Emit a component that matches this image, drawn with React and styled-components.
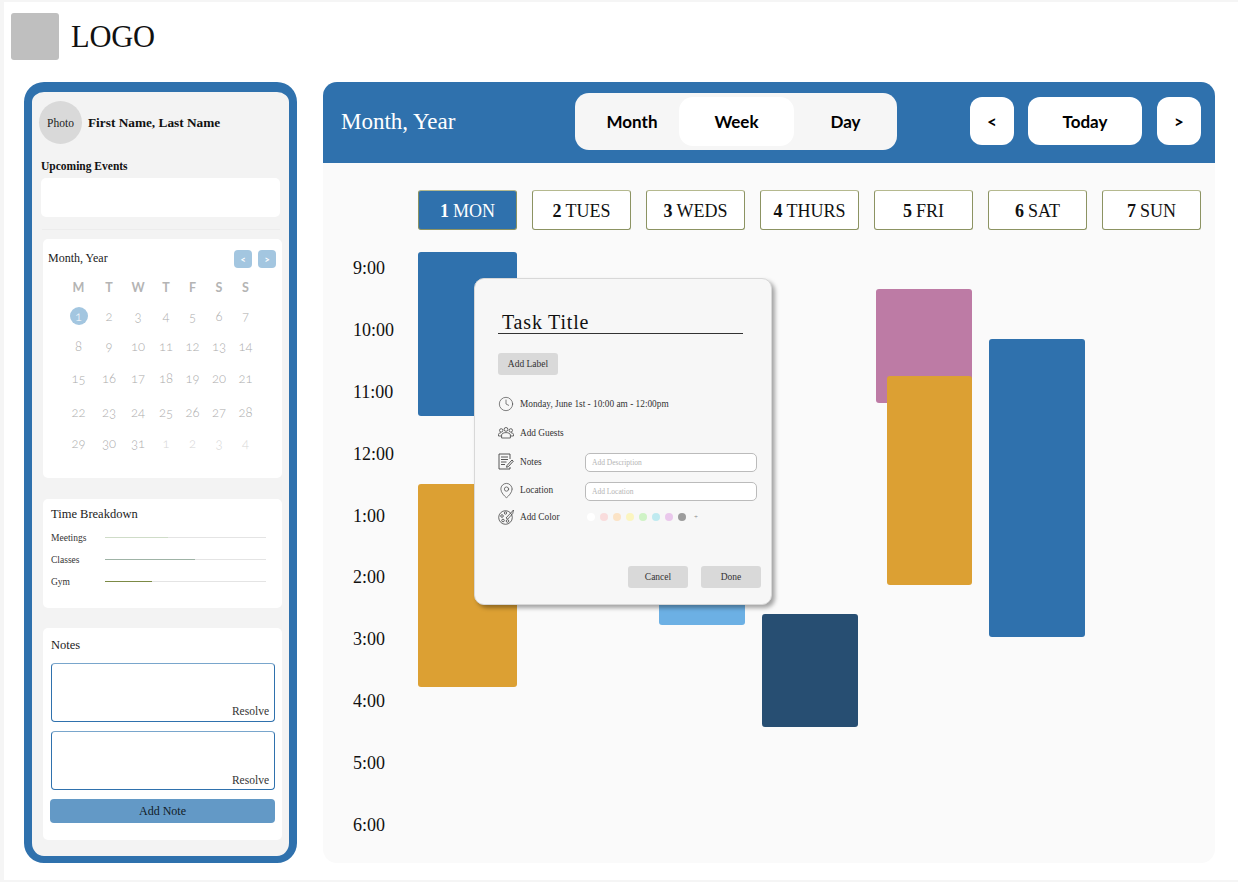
import React from "react";
import styled, { createGlobalStyle } from "styled-components";
import { Clock, MapPin } from "lucide-react";

const SERIF = `"Liberation Serif", "DejaVu Serif", serif`;
const SANS = `Lato, "Open Sans", sans-serif`;
const BLUE = "#2f71ad";

const GlobalStyle = createGlobalStyle`
  html, body { margin: 0; padding: 0; background: #f5f5f5; }
  body { font-family: ${SERIF}; color: #111; }
  * { box-sizing: border-box; }
`;

const weekdays = ["M", "T", "W", "T", "F", "S", "S"];
const days = [
  ...Array.from({ length: 31 }, (_, i) => ({ n: i + 1 })),
  { n: 1, faded: true },
  { n: 2, faded: true },
  { n: 3, faded: true },
  { n: 4, faded: true },
];
const breakdown = [
  { name: "Meetings", pct: 39, color: "#cfdcc8" },
  { name: "Classes", pct: 56, color: "#9fb3a6" },
  { name: "Gym", pct: 29, color: "#7c8a45" },
];
const tabs = [
  ["1", "MON"],
  ["2", "TUES"],
  ["3", "WEDS"],
  ["4", "THURS"],
  ["5", "FRI"],
  ["6", "SAT"],
  ["7", "SUN"],
];
const times = ["9:00", "10:00", "11:00", "12:00", "1:00", "2:00", "3:00", "4:00", "5:00", "6:00"];
const events = [
  { x: 95, y: 89, w: 99, h: 164, c: BLUE },
  { x: 95, y: 321, w: 99, h: 203, c: "#dca033" },
  { x: 336, y: 400, w: 86, h: 62, c: "#6cb0e4" },
  { x: 439, y: 451, w: 96, h: 113, c: "#274e72" },
  { x: 553, y: 126, w: 96, h: 114, c: "#bd7ba5" },
  { x: 564, y: 213, w: 85, h: 209, c: "#dca033" },
  { x: 666, y: 176, w: 96, h: 298, c: BLUE },
];
const swatches = ["#ffffff", "#f9dcdc", "#fbe3c6", "#fbf5c0", "#cff3c6", "#bfeaf0", "#eac8ec", "#9c9c9c"];

const Page = styled.div`
  width: 1238px;
  height: 882px;
  overflow: hidden;
`;
const Sheet = styled.div`
  margin: 2px 0 2px 4px;
  height: 878px;
  background: #fff;
  display: flex;
  flex-direction: column;
`;
const TopBar = styled.header`
  display: flex;
  align-items: center;
  gap: 12px;
  height: 47px;
  margin: 11px 0 22px 7px;
`;
const LogoMark = styled.div`
  width: 48px;
  height: 47px;
  background: #bfbfbf;
  border-radius: 3px;
`;
const LogoText = styled.div`
  font-size: 30.5px;
  letter-spacing: -0.2px;
  margin-top: 2px;
`;
const Columns = styled.div`
  display: flex;
  align-items: flex-start;
  gap: 26px;
  padding-left: 20px;
`;
const Sidebar = styled.aside`
  width: 273px;
  height: 781px;
  background: #f3f3f3;
  border: solid ${BLUE};
  border-width: 10px 8px 7px;
  border-radius: 20px;
  padding: 9px 7px 0 7px;
  display: flex;
  flex-direction: column;
`;
const Profile = styled.div`
  display: flex;
  align-items: center;
  gap: 6px;
`;
const Avatar = styled.div`
  width: 43px;
  height: 43px;
  border-radius: 50%;
  background: #d9d9d9;
  display: flex;
  align-items: center;
  justify-content: center;
  font-size: 11.5px;
  color: #222;
`;
const UserName = styled.div`
  font-size: 13.3px;
  font-weight: bold;
`;
const SectionLabel = styled.div`
  margin: 15px 0 5px 2px;
  font-size: 11.5px;
  line-height: 14px;
  font-weight: bold;
`;
const UpcomingBox = styled.div`
  margin-left: 2px;
  width: 239px;
  height: 39px;
  background: #fff;
  border-radius: 5px;
`;
const Rule = styled.div`
  margin: 12px 0 9px 3px;
  width: 238px;
  height: 1px;
  background: #ececec;
`;
const Card = styled.section`
  margin-left: 4px;
  width: 239px;
  height: ${(p) => p.$h}px;
  margin-bottom: ${(p) => p.$mb || 0}px;
  background: #fff;
  border-radius: 5px;
`;
const CalendarHead = styled.div`
  display: flex;
  align-items: center;
  justify-content: space-between;
  padding: 11px 6px 0 5px;
`;
const CalendarTitle = styled.div`
  font-size: 12px;
  color: #222;
  margin-top: -2px;
`;
const MiniButtons = styled.div`
  display: flex;
  gap: 6px;
`;
const MiniButton = styled.div`
  width: 18px;
  height: 18px;
  border-radius: 4px;
  background: #a3c6e0;
  color: #fff;
  font-family: ${SANS};
  font-weight: 700;
  font-size: 9px;
  display: flex;
  align-items: center;
  justify-content: center;
`;
const CalendarGrid = styled.div`
  display: grid;
  grid-template-columns: 31px 30px 28px 28px 25px 28px 25px;
  grid-template-rows: 29px 29px 31px 33px 35px 27px;
  margin: 4.5px 0 0 20px;
  font-family: ${SANS};
  justify-items: center;
  align-items: center;
`;
const WeekdayCell = styled.div`
  font-size: 12.5px;
  font-weight: 700;
  color: #b4b4b4;
`;
const DayCell = styled.div`
  width: 18px;
  height: 18px;
  border-radius: 50%;
  display: flex;
  align-items: center;
  justify-content: center;
  font-size: 13px;
  font-weight: 300;
  font-variant-numeric: oldstyle-nums;
  white-space: nowrap;
  color: ${(p) => (p.$active ? "#fff" : p.$faded ? "#d6d6d6" : "#ababab")};
  background: ${(p) => (p.$active ? "#a3c6e0" : "transparent")};
`;
const CardTitle = styled.div`
  font-size: 12.5px;
  color: #1c1c1c;
  padding: ${(p) => p.$pad || "8px 0 0 8px"};
`;
const BarRow = styled.div`
  display: flex;
  align-items: center;
  height: 22px;
  padding-left: 8px;
  font-size: 9.5px;
  color: #333;
`;
const BarName = styled.div`
  width: 54px;
`;
const BarTrack = styled.div`
  position: relative;
  width: 161px;
  height: 1px;
  background: #e4e4e4;
  margin-top: -1px;
`;
const BarFill = styled.div`
  height: 1px;
`;
const BarList = styled.div`
  margin-top: 5px;
`;
const NoteBox = styled.div`
  margin: 0 7px 9px 8px;
  width: 224px;
  height: 59px;
  background: #fff;
  border: 1px solid ${BLUE};
  border-top-color: #79a6cc;
  border-radius: 4px;
  display: flex;
  align-items: flex-end;
  justify-content: flex-end;
  padding: 0 5px ${(p) => p.$pb}px 0;
  font-size: 11.5px;
  line-height: 13px;
  color: #333;
`;
const NoteList = styled.div`
  margin-top: 10px;
`;
const AddNote = styled.div`
  margin-left: 7px;
  width: 225px;
  height: 24px;
  background: #6399c6;
  border-radius: 4px;
  display: flex;
  align-items: center;
  justify-content: center;
  font-size: 12px;
  color: #111b26;
`;
const Main = styled.main`
  width: 892px;
  height: 781px;
  background: #fafafa;
  border-radius: 14px;
  overflow: hidden;
  display: flex;
  flex-direction: column;
`;
const MainHead = styled.div`
  height: 81px;
  background: ${BLUE};
  display: flex;
  align-items: center;
  padding: 0 14px 0 18px;
`;
const MainTitle = styled.div`
  width: 234px;
  font-size: 23px;
  color: #fff;
  margin-top: -2px;
`;
const Segmented = styled.div`
  width: 322px;
  height: 57px;
  padding: 4px;
  background: #f6f6f6;
  border-radius: 14px;
  display: flex;
  justify-content: space-between;
  margin-top: -3px;
`;
const Segment = styled.div`
  width: ${(p) => p.$w}px;
  padding-left: ${(p) => p.$pl || 0}px;
  border-radius: 14px;
  background: ${(p) => (p.$active ? "#fff" : "transparent")};
  display: flex;
  align-items: center;
  justify-content: center;
  font-family: ${SANS};
  font-weight: 700;
  font-size: 17px;
  color: #000;
`;
const NavGroup = styled.div`
  margin-left: auto;
  display: flex;
  gap: 14px;
  margin-top: -3px;
`;
const NavButton = styled.div`
  width: ${(p) => p.$w}px;
  height: 48px;
  background: #fff;
  border-radius: 12px;
  display: flex;
  align-items: center;
  justify-content: center;
  font-family: ${SANS};
  font-weight: 700;
  font-size: 17px;
  color: #000;
  &:last-child {
    margin-left: 1px;
  }
`;
const Board = styled.div`
  position: relative;
  flex: 1;
`;
const TabRow = styled.div`
  display: flex;
  gap: 15px;
  padding: 27px 0 0 95px;
`;
const DayTab = styled.div`
  width: 99px;
  height: 40px;
  border: 1px solid #8c9362;
  border-top-color: #b5b98f;
  border-radius: 3px;
  padding-top: 2px;
  background: ${(p) => (p.$active ? BLUE : "#fff")};
  color: ${(p) => (p.$active ? "#fff" : "#111")};
  display: flex;
  align-items: center;
  justify-content: center;
  gap: 4px;
  font-size: 18px;
  b {
    font-weight: bold;
  }
`;
const TimeColumn = styled.div`
  margin: 8px 0 0 30px;
`;
const TimeLabel = styled.div`
  height: 61.9px;
  line-height: 61.9px;
  font-size: 18px;
  color: #111;
`;
const EventBlock = styled.div`
  position: absolute;
  left: ${(p) => p.$x}px;
  top: ${(p) => p.$y}px;
  width: ${(p) => p.$w}px;
  height: ${(p) => p.$h}px;
  background: ${(p) => p.$c};
  border-radius: 3px;
`;
const Modal = styled.div`
  position: absolute;
  left: 151px;
  top: 115px;
  width: 298px;
  height: 327px;
  background: #f7f7f7;
  border: 1px solid #d8d8d8;
  border-radius: 10px;
  box-shadow: 3px 3px 4px rgba(0, 0, 0, 0.35);
  padding: 30px 10px 0 23px;
  display: flex;
  flex-direction: column;
`;
const TaskTitle = styled.div`
  width: 245px;
  height: 25px;
  border-bottom: 1px solid #333;
  padding: 1px 0 0 4px;
  font-size: 20px;
  line-height: 25px;
  letter-spacing: 0.8px;
`;
const GrayButton = styled.div`
  width: 60px;
  height: 22px;
  background: #d9d9d9;
  border-radius: 3px;
  display: flex;
  align-items: center;
  justify-content: center;
  font-size: 9.5px;
  color: #333;
`;
const LabelButton = styled(GrayButton)`
  margin: 19px 0 14px;
`;
const InfoRow = styled.div`
  display: flex;
  align-items: center;
  height: ${(p) => p.$h}px;
  font-size: 9.3px;
  color: #333;
`;
const IconSlot = styled.div`
  width: 22px;
  height: 18px;
  display: flex;
  align-items: center;
  color: #444;
`;
const RowLabel = styled.div`
  width: 65px;
`;
const FieldInput = styled.div`
  width: 172px;
  height: 19px;
  margin-top: 2px;
  background: #fff;
  border: 1px solid #bbb;
  border-radius: 5px;
  padding-left: 6px;
  font-size: 7.5px;
  line-height: 17px;
  color: #b4b4b4;
`;
const Swatches = styled.div`
  display: flex;
  align-items: center;
  gap: 5px;
  margin-left: 2px;
`;
const Swatch = styled.span`
  width: 8px;
  height: 8px;
  border-radius: 50%;
  background: ${(p) => p.$c};
`;
const PlusMark = styled.span`
  font-size: 7px;
  color: #888;
  margin-left: 3px;
`;
const ModalActions = styled.div`
  margin-top: auto;
  margin-bottom: 16px;
  margin-left: 130px;
  display: flex;
  gap: 13px;
`;

function GuestsIcon() {
  return (
    <svg width="16" height="12" viewBox="0 0 16 12" fill="none" stroke="currentColor" strokeWidth="0.8">
      <circle cx="3.2" cy="3.4" r="1.7" />
      <circle cx="8" cy="2.4" r="1.9" />
      <circle cx="12.8" cy="3.4" r="1.7" />
      <path d="M.5 9V7.6C.5 6.4 1.6 5.8 3 5.8M15.5 9V7.6c0-1.2-1.1-1.8-2.5-1.8" />
      <path d="M3.6 11V8c0-1.3 1.8-2.4 4.4-2.4s4.4 1.1 4.4 2.4v3" />
      <path d="M.5 9h3M12.400 9h3M3.600 11h8.800" />
    </svg>
  );
}

function NotesIcon() {
  return (
    <svg width="16" height="17" viewBox="0 0 16 17" fill="none" stroke="currentColor" strokeWidth="0.9">
      <path d="M12 6V1H1v15h11v-2" />
      <path d="M3 4h7M3 6.500h7M3 9h5.500M3 11.500h4" />
      <path d="M9 12.500l5-5.500 1.300 1.200-5 5.500-1.800.6z" />
    </svg>
  );
}

function PaletteIcon() {
  return (
    <svg width="17" height="16" viewBox="0 0 17 16" fill="none" stroke="currentColor" strokeWidth="0.8">
      <circle cx="7.500" cy="8.500" r="6.800" />
      <circle cx="4" cy="7" r="1.300" />
      <circle cx="5" cy="11.500" r="1.300" />
      <circle cx="9.500" cy="12" r="1.300" />
      <circle cx="7.500" cy="4" r="1.200" />
      <path d="M8 9l7.500-8-.8 3.600-5 5.500z" />
    </svg>
  );
}

export default function App() {
  return (
    <Page>
      <GlobalStyle />
      <Sheet>
        <TopBar>
          <LogoMark />
          <LogoText>LOGO</LogoText>
        </TopBar>
        <Columns>
          <Sidebar>
            <Profile>
              <Avatar>Photo</Avatar>
              <UserName>First Name, Last Name</UserName>
            </Profile>
            <SectionLabel>Upcoming Events</SectionLabel>
            <UpcomingBox />
            <Rule />
            <Card $h={239} $mb={21}>
              <CalendarHead>
                <CalendarTitle>Month, Year</CalendarTitle>
                <MiniButtons>
                  <MiniButton>&lt;</MiniButton>
                  <MiniButton>&gt;</MiniButton>
                </MiniButtons>
              </CalendarHead>
              <CalendarGrid>
                {weekdays.map((d, i) => (
                  <WeekdayCell key={i}>{d}</WeekdayCell>
                ))}
                {days.map((d, i) => (
                  <DayCell key={i} $active={i === 0} $faded={d.faded}>
                    {d.n}
                  </DayCell>
                ))}
              </CalendarGrid>
            </Card>
            <Card $h={109} $mb={20}>
              <CardTitle>Time Breakdown</CardTitle>
              <BarList>
                {breakdown.map((b) => (
                  <BarRow key={b.name}>
                    <BarName>{b.name}</BarName>
                    <BarTrack>
                      <BarFill style={{ width: `${b.pct}%`, background: b.color }} />
                    </BarTrack>
                  </BarRow>
                ))}
              </BarList>
            </Card>
            <Card $h={212}>
              <CardTitle $pad="10px 0 0 8px">Notes</CardTitle>
              <NoteList>
                <NoteBox $pb={3}>Resolve</NoteBox>
                <NoteBox $pb={2}>Resolve</NoteBox>
              </NoteList>
              <AddNote>Add Note</AddNote>
            </Card>
          </Sidebar>
          <Main>
            <MainHead>
              <MainTitle>Month, Year</MainTitle>
              <Segmented>
                <Segment $w={100} $pl={6}>
                  Month
                </Segment>
                <Segment $w={115} $active>
                  Week
                </Segment>
                <Segment $w={99} $pl={4}>
                  Day
                </Segment>
              </Segmented>
              <NavGroup>
                <NavButton $w={44}>&lt;</NavButton>
                <NavButton $w={114}>Today</NavButton>
                <NavButton $w={44}>&gt;</NavButton>
              </NavGroup>
            </MainHead>
            <Board>
              <TabRow>
                {tabs.map(([num, name], i) => (
                  <DayTab key={name} $active={i === 0}>
                    <b>{num}</b>
                    {name}
                  </DayTab>
                ))}
              </TabRow>
              <TimeColumn>
                {times.map((t) => (
                  <TimeLabel key={t}>{t}</TimeLabel>
                ))}
              </TimeColumn>
              {events.map((e, i) => (
                <EventBlock key={i} $x={e.x} $y={e.y} $w={e.w} $h={e.h} $c={e.c} />
              ))}
              <Modal>
                <TaskTitle>Task Title</TaskTitle>
                <LabelButton>Add Label</LabelButton>
                <InfoRow $h={30}>
                  <IconSlot>
                    <Clock size={16} strokeWidth={1} />
                  </IconSlot>
                  Monday, June 1st - 10:00 am - 12:00pm
                </InfoRow>
                <InfoRow $h={28}>
                  <IconSlot>
                    <GuestsIcon />
                  </IconSlot>
                  Add Guests
                </InfoRow>
                <InfoRow $h={29}>
                  <IconSlot>
                    <NotesIcon />
                  </IconSlot>
                  <RowLabel>Notes</RowLabel>
                  <FieldInput>Add Description</FieldInput>
                </InfoRow>
                <InfoRow $h={28}>
                  <IconSlot>
                    <MapPin size={17} strokeWidth={1} />
                  </IconSlot>
                  <RowLabel>Location</RowLabel>
                  <FieldInput>Add Location</FieldInput>
                </InfoRow>
                <InfoRow $h={25}>
                  <IconSlot>
                    <PaletteIcon />
                  </IconSlot>
                  <RowLabel>Add Color</RowLabel>
                  <Swatches>
                    {swatches.map((c) => (
                      <Swatch key={c} $c={c} />
                    ))}
                    <PlusMark>+</PlusMark>
                  </Swatches>
                </InfoRow>
                <ModalActions>
                  <GrayButton>Cancel</GrayButton>
                  <GrayButton>Done</GrayButton>
                </ModalActions>
              </Modal>
            </Board>
          </Main>
        </Columns>
      </Sheet>
    </Page>
  );
}
